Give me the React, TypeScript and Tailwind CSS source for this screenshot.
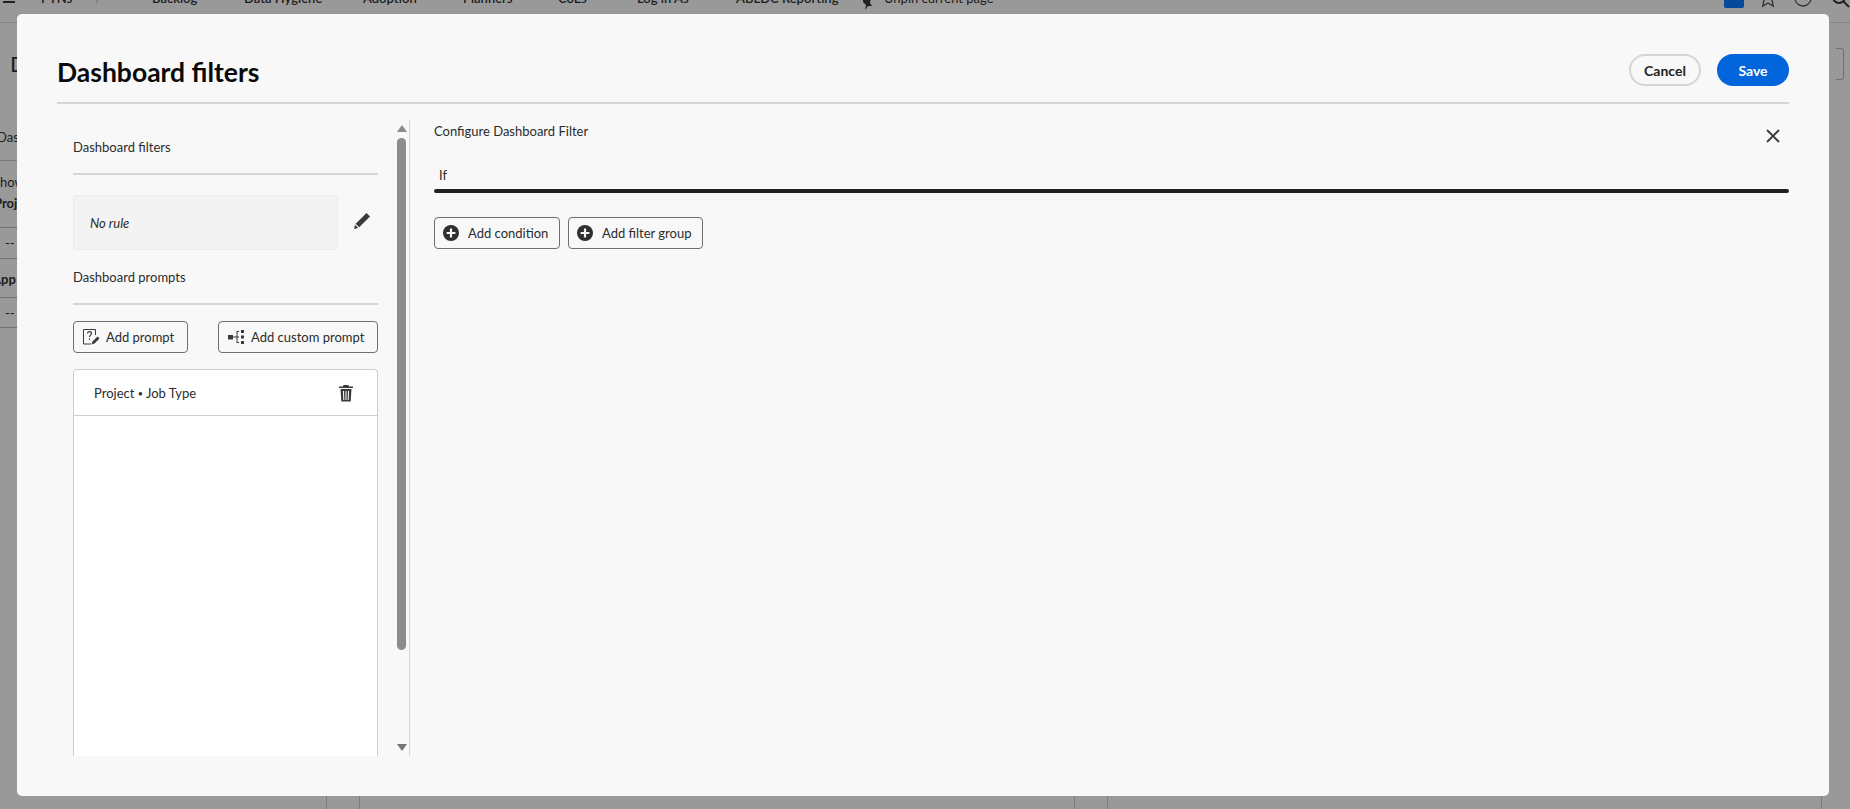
import React from 'react';

const navItems = [
  { label: 'PTNs', className: 'ml-[26px] w-[54px]' },
  { label: '/', className: 'w-[57px] text-[#777]' },
  { label: 'Backlog', className: 'w-[92px]' },
  { label: 'Data Hygiene', className: 'w-[119px]' },
  { label: 'Adoption', className: 'w-[100px]' },
  { label: 'Planners', className: 'w-[95px]' },
  { label: 'CoEs', className: 'w-[79px]' },
  { label: 'Log in As', className: 'w-[99px]' },
  { label: 'ABLDC Reporting', className: 'w-[124px]' },
];

const PlusCircle = () => (
  <svg className="w-4 h-4 shrink-0" viewBox="0 0 16 16">
    <circle cx="8" cy="8" r="8" fill="#2f2f2f" />
    <path d="M8 3.600v8.800M3.600 8h8.800" stroke="#f8f8f8" strokeWidth="2.200" />
  </svg>
);

const OutlineButton: React.FC<{ icon: React.ReactNode; label: string; className: string }> = ({ icon, label, className }) => (
  <button className={`h-8 flex items-center bg-[#f8f8f8] border border-[#6e6e6e] rounded-[4px] text-[13px] text-[#2c2c2c] ${className}`}>
    {icon}
    <span className="mt-[1px]">{label}</span>
  </button>
);

const Divider = () => <div className="h-[2px] bg-[#d5d5d5]" />;

const Background = () => (
  <div className="h-screen flex flex-col overflow-hidden bg-[#999999] text-[#1c1c1c] text-[13px]">
    <div className="h-[23px] shrink-0 border-b border-[#868686] flex items-start">
      <div className="w-3 h-[2px] bg-[#222] ml-[3px] mt-[1px] shrink-0" />
      <div className="flex items-center -mt-[11px] h-5 font-semibold whitespace-nowrap">
        {navItems.map((item) => (
          <span key={item.label} className={item.className}>{item.label}</span>
        ))}
        <svg className="w-4 h-4 mr-[8px] mt-2" viewBox="0 0 16 16" fill="#222"><path d="M3 2h8l-1 6 2 3H8l-3 4 1-5-3-3z" /></svg>
        <span className="font-normal">Unpin current page</span>
      </div>
      <div className="ml-auto flex items-start">
        <div className="w-5 h-[8px] bg-[#064a9e] rounded-b-[2px] mr-[14px]" />
        <svg className="w-5 h-5 -mt-[12px] mr-[15px]" viewBox="0 0 20 20" fill="none" stroke="#333" strokeWidth="1.300"><path d="M10 2l2.500 5.500 6 .6-4.500 4 1.300 6L10 15l-5.300 3.100 1.300-6-4.500-4 6-.6z" /></svg>
        <svg className="w-5 h-5 -mt-[12px] mr-[18px]" viewBox="0 0 20 20" fill="none" stroke="#333" strokeWidth="1.300"><circle cx="10" cy="10" r="8" /><path d="M10 5v5l3 2" /></svg>
        <svg className="w-5 h-5 -mt-[11px] -mr-[1px]" viewBox="0 0 20 20" fill="none" stroke="#222" strokeWidth="2"><circle cx="8" cy="8" r="6" /><path d="M12.500 12.500L18 18" /></svg>
      </div>
    </div>
    <div className="flex justify-between flex-1">
      <div className="w-[17px] whitespace-nowrap overflow-hidden">
        <div className="h-[104px] pt-[26px] text-[22px] leading-[30px] pl-[10px]">D</div>
        <div className="h-[34px] border-b border-[#7d7d7d] -ml-[3px] leading-5">Dash</div>
        <div className="pt-[11px] -ml-[7px] leading-5">Show</div>
        <div className="-ml-[6px] font-bold leading-5 mt-[1px]">Proj</div>
        <div className="border-t border-[#6f6f6f] mt-[14px] h-[31px] pl-[5px] leading-[30px]">--</div>
        <div className="border-t border-[#6f6f6f] h-[39px] pt-[10px] -ml-[8px] font-bold leading-5">App</div>
        <div className="border-t border-[#6f6f6f] h-[30px] pl-[5px] leading-[30px]">--</div>
        <div className="border-t border-[#6f6f6f]" />
      </div>
      <div className="w-[14px] pt-[25px]">
        <div className="w-[8px] h-8 border border-l-0 border-[#6f6f6f] rounded-r-[3px]" />
      </div>
    </div>
    <div className="h-[13px] shrink-0 flex">
      <div className="ml-[326px] w-[34px] border-x border-[#7d7d7d]" />
      <div className="ml-[714px] w-[34px] border-x border-[#7d7d7d]" />
      <div className="ml-[713px] border-l border-[#7d7d7d]" />
    </div>
  </div>
);

const App: React.FC = () => {
  return (
    <div className="relative font-['Lato','Noto_Sans',sans-serif]">
      <Background />
      <div className="fixed left-[17px] top-[14px] w-[1812px] h-[782px] bg-[#f8f8f8] rounded-[5px] pt-10 px-10 text-[#2c2c2c]">
        <div className="h-[50px] border-b-2 border-[#d5d5d5] flex justify-between items-start">
          <h1 className="text-[26.5px] leading-8 font-bold text-[#0a0a0a] mt-[2px]">Dashboard filters</h1>
          <div className="flex gap-4">
            <button className="w-[72px] h-8 border-2 border-[#d5d5d5] rounded-full text-[14px] font-bold text-[#222]">Cancel</button>
            <button className="w-[72px] h-8 bg-[#0265dc] rounded-full text-[14px] font-bold text-white">Save</button>
          </div>
        </div>

        <div className="flex h-[652px] pt-4">
          <div className="w-[353px] flex shrink-0 border-r border-[#d5d5d5]">
            <div className="w-[305px] ml-4 shrink-0 flex flex-col">
              <div className="text-[13px] leading-5 mt-[17px]">Dashboard filters</div>
              <div className="mt-[16px]"><Divider /></div>
              <div className="flex items-center mt-[20px]">
                <div className="w-[265px] h-[55px] flex items-center pl-[16px] pt-[2px] bg-[#f3f3f3] border border-[#ebebeb] rounded-[3px] text-[13px] italic">No rule</div>
                <svg className="w-[18px] h-[18px] ml-[15px] -mt-1" viewBox="0 0 18 18" fill="#3a3a3a">
                  <path d="M13.500 1l3.500 3.500L6.200 15.300 2.700 11.800z" />
                  <path d="M2.100 12.800l3.100 3.100L1 17z" />
                </svg>
              </div>
              <div className="text-[13px] leading-5 mt-[17px]">Dashboard prompts</div>
              <div className="mt-[16px]"><Divider /></div>
              <div className="flex justify-between mt-4">
                <OutlineButton
                  className="w-[115px] pl-2 gap-[6px]"
                  label="Add prompt"
                  icon={
                    <svg className="w-[18px] h-[18px]" viewBox="0 0 18 18" fill="none" stroke="#3a3a3a">
                      <path d="M9 16H1.500V1.500h12V7" />
                      <path d="M5.500 5.500c0-2.500 4-2.500 4 0 0 1.700-2 1.600-2 3.500M7.500 10.500v1.500" strokeWidth="1.200" />
                      <path d="M15.500 8.500l2 2-5 5-3 1 1-3z" fill="#3a3a3a" stroke="none" />
                    </svg>
                  }
                />
                <OutlineButton
                  className="w-[160px] pl-2 gap-[6px]"
                  label="Add custom prompt"
                  icon={
                    <svg className="w-[18px] h-[18px]" viewBox="0 0 18 18" fill="#3a3a3a">
                      <rect x="1" y="7" width="5" height="4.500" />
                      <path d="M6 9h4M10 3v12" stroke="#3a3a3a" fill="none" />
                      <path d="M10 3.500h2M10 9h2M10 14.500h2" stroke="#3a3a3a" fill="none" />
                      <rect x="14" y="2" width="3" height="3" />
                      <rect x="14" y="7.500" width="3" height="3" />
                      <rect x="14" y="13" width="3" height="3" />
                    </svg>
                  }
                />
              </div>
              <div className="flex-1 mt-4 bg-white border-x border-t border-[#cfcfcf] rounded-t-[4px]">
                <div className="h-[46px] flex items-center justify-between pl-5 pr-[23px] border-b border-[#cfcfcf] text-[13px]">
                  <span className="mt-[2px]">Project <span className="text-[9px] align-[1px]">•</span> Job Type</span>
                  <svg className="w-[16px] h-[18px]" viewBox="0 0 16 18" fill="#3a3a3a">
                    <path d="M5.500 1h5l.5 1.500h4V4H1V2.500h4z" />
                    <path d="M2.500 5h11l-.8 12.500H3.300zM5 7l.3 9h1L6 7zm2.500 0v9h1V7zM10 7l-.300 9h1L11 7z" fillRule="evenodd" />
                  </svg>
                </div>
              </div>
            </div>
            <div className="ml-[19px] w-[9px] flex flex-col items-center">
              <div className="mt-[5px] w-0 h-0 border-x-[5px] border-x-transparent border-b-[7px] border-b-[#8a8a8a]" />
              <div className="mt-[6px] w-[9px] h-[512px] bg-[#8c8c8c] rounded-full" />
              <div className="mt-auto mb-[5px] w-0 h-0 border-x-[5px] border-x-transparent border-t-[7px] border-t-[#757575]" />
            </div>
          </div>

          <div className="flex-1 pl-[24px] flex flex-col">
            <div className="flex justify-between items-start">
              <div className="text-[13px] leading-5 mt-[1px]">Configure Dashboard Filter</div>
              <svg className="w-[14px] h-[14px] mr-[9px] mt-[9px]" viewBox="0 0 14 14" stroke="#3a3a3a" strokeWidth="1.800">
                <path d="M1 1l12 12M13 1L1 13" />
              </svg>
            </div>
            <div className="text-[13px] leading-5 pl-[5px] mt-[22px]">If</div>
            <div className="h-1 mt-[4px] bg-[#222] rounded-full" />
            <div className="flex gap-2 mt-6">
              <OutlineButton className="w-[126px] pl-2 gap-[9px]" label="Add condition" icon={<PlusCircle />} />
              <OutlineButton className="w-[135px] pl-2 gap-[9px]" label="Add filter group" icon={<PlusCircle />} />
            </div>
          </div>
        </div>
      </div>
    </div>
  );
};

export default App;
